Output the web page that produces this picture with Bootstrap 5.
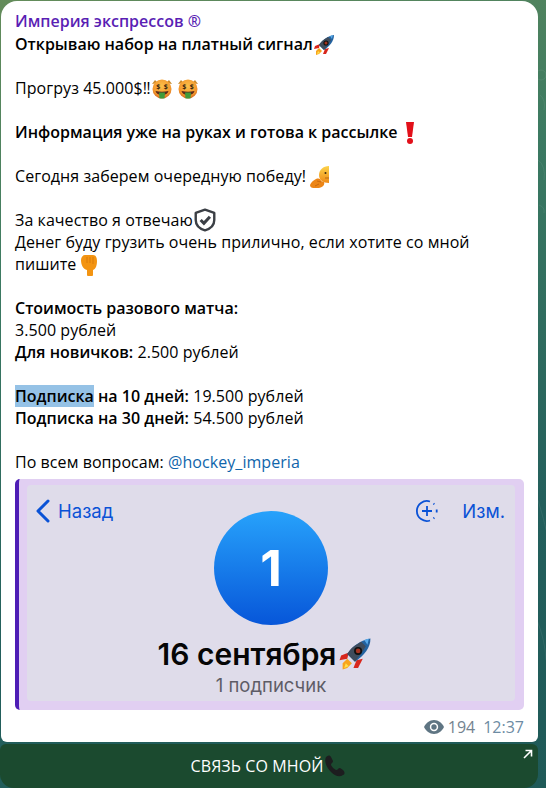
<!DOCTYPE html>
<html lang="ru">
<head>
    <meta charset="UTF-8">
    <meta name="viewport" content="width=device-width, initial-scale=1.0">
    <title>Империя экспрессов</title>
    <link rel="stylesheet" href="https://cdn.jsdelivr.net/npm/bootstrap@5.3.0/dist/css/bootstrap.min.css">
    <style>
        html, body { height: 100%; }
        body { background: linear-gradient(165deg, #648c5a 0%, #3c7a62 30%, #235f5c 70%, #1f5a58 100%); font-family: "Open Sans", sans-serif; font-size: 16px; line-height: 22px; color: #000; overflow: hidden; width: 546px; height: 788px; position: relative; }
        .doodles { position: absolute; inset: 0; pointer-events: none; }
        .chat-col { position: relative; width: 538px; padding-top: 1px; }
        .bubble { background: #fff; margin-left: 1px; border-radius: 16px 16px 6px 6px; padding: 9px 14px 0 14px; height: 741px; }
        .sender { color: #5a1fb4; font-weight: 600; }
        .msg { letter-spacing: .06px; margin-top: 1px; }
        .msg p { margin: 0 0 22px 0; }
        .msg p.last-line { margin-bottom: 0; }
        .msg b { font-weight: 600; letter-spacing: 0; }
        .em { display: inline-block; width: 22px; height: 22px; vertical-align: 0; margin-top: -6px; margin-bottom: -6px; }
        .em-wide { width: 24px; height: 24px; }
        .em-bang { width: 14px; margin-left: 1px; }
        .sel { background: #95c2e6; }
        .tg-link { color: #0f65ab; text-decoration: none; }
        .frame { width: 509px; height: 231px; margin-top: 6px; background: #e1cff2; border-left: 4px solid #4e1db5; border-radius: 5px; padding: 6px 9px 9px 8px; }
        .shot { height: 216px; background: #dfdcea; border-radius: 4px; font-family: Inter, sans-serif; color: #0a52d6; }
        .shot-bar { padding: 14px 10px 0 8px; font-size: 18.500px; line-height: 22px; }
        .shot-edit { margin-left: 23px; }
        .shot-circle { width: 114px; height: 114px; border-radius: 50%; background: linear-gradient(180deg, #27a2fb, #0756d9); color: #fff; font-size: 50px; font-weight: 700; line-height: 114px; text-align: center; margin-top: -12px; }
        .shot-title { color: #060606; font-size: 30px; font-weight: 600; line-height: 38px; margin-top: 10px; margin-right: 12px; white-space: nowrap; }
        .shot-title svg { width: 34px; height: 34px; vertical-align: -6px; margin-left: 2px; }
        .shot-sub { color: #5e5c66; font-size: 18.500px; line-height: 22px; margin-top: 1px; }
        .meta { color: #6d8ba3; line-height: 20px; margin-top: 7px; }
        .meta .views { color: #74838f; }
        .action { position: relative; height: 44px; margin-top: 2px; background: #1b4a2f; border-radius: 6px 6px 14px 14px; color: #fff; letter-spacing: .1px; }
        .action svg.ph { width: 24px; height: 24px; vertical-align: -2px; margin-top: -4px; margin-bottom: -4px; }
        .action svg.arr { position: absolute; top: 5px; right: 5px; width: 11px; height: 11px; }
    </style>
</head>
<body>
<svg width="0" height="0" class="position-absolute">
    <defs>
        <linearGradient id="shg" x1="0" y1="0" x2="0" y2="1"><stop offset="0" stop-color="#fcd34a"/><stop offset="1" stop-color="#ee8a16"/></linearGradient>
        <radialGradient id="mng" cx=".5" cy=".35" r=".7"><stop offset="0" stop-color="#fbc04a"/><stop offset=".7" stop-color="#f3962c"/><stop offset="1" stop-color="#c85a1a"/></radialGradient>
        <symbol id="rocket" viewBox="0 0 22 22">
            <path d="M7 10 2 12 1 15l5-1z" fill="#d8261c"/>
            <path d="M12 15l-2 5 3 0 3-6z" fill="#d8261c"/>
            <path d="M6 14l-3 3 0 4 3-1 3-3z" fill="#f8a41c"/>
            <path d="M5 17l-1 3 3-1z" fill="#ffe14a"/>
            <path d="M6 11C9 6 15 2 21 1c0 6-4 11-10 15z" fill="#23629f"/>
            <path d="M6 11C9 6 12 5 15 3l3 3c-2 4-5 7-7 10z" fill="#3f4c5c"/>
            <path d="M17 2l3-1-1 4z" fill="#57a9ea"/>
            <circle cx="13" cy="9" r="2.600" fill="#111"/>
            <circle cx="13" cy="9" r="1.500" fill="#a33320"/>
        </symbol>
        <symbol id="money" viewBox="0 0 22 22">
            <path d="M1 6 4 2 7 5zM21 6l-3-4-3 3z" fill="#c98a2a"/>
            <circle cx="11" cy="11" r="9.500" fill="url(#mng)"/>
            <text x="7.300" y="11" font-size="7" font-weight="700" text-anchor="middle" fill="#3f2a10" font-family="Open Sans, sans-serif">$</text>
            <text x="14.700" y="11" font-size="7" font-weight="700" text-anchor="middle" fill="#3f2a10" font-family="Open Sans, sans-serif">$</text>
            <path d="M4.500 13q6.500 1.500 13 0q-1 4-6.500 4t-6.500-4z" fill="#5b2a1a"/>
            <path d="M8 14.500h6l-.5 6h-5z" fill="#3f9a3a"/>
        </symbol>
        <symbol id="shush" viewBox="0 0 22 22">
            <path d="M19 0c-6 0-10 4-10 9 0 5 4 8 10 8z" fill="url(#shg)"/>
            <circle cx="15.500" cy="7" r="1" fill="#3a2a10"/>
            <path d="M15 12h4" stroke="#b86a10" fill="none"/>
            <path d="M0 19c1-3 4-5 6-6 3-1 5 0 5 2l3 1c1 3-1 5-5 6-3 0-9 1-9-3z" fill="#ec8516"/>
            <path d="M5 20l4-2M7 15l4 1" stroke="#c96a0c" fill="none"/>
        </symbol>
        <symbol id="point" viewBox="0 0 22 22">
            <path d="M5 6c0-3 2-5 4-5h8c3 0 4 3 4 6 0 4-1 8-4 9v5c0 1-1 1-2 1h-2c-1 0-2 0-2-1v-5c-4-1-6-5-6-10z" fill="#f39412"/>
            <path d="M11 3v6M14 3v6M17 3v7" stroke="#d97a08" fill="none"/>
        </symbol>
    </defs>
</svg>

<svg class="doodles" viewBox="0 0 546 788" fill="none" stroke="#fff" stroke-opacity=".07">
    <circle cx="541" cy="75" r="5"/><path d="M540 95q6 5 4 15M538 160q8 6 6 20M539 205q6 2 5 8M538 500q6 20 8 30M537 620q8 20 9 40"/>
</svg>

<div class="chat-col">
    <div class="bubble">
        <div class="sender">Империя экспрессов ®</div>
        <div class="msg">
            <p><b>Открываю набор на платный сигнал<svg class="em"><use href="#rocket"/></svg></b></p>
            <p>Прогруз 45.000$‼<svg class="em"><use href="#money"/></svg><svg class="em ms-1"><use href="#money"/></svg></p>
            <p><b>Информация уже на руках и готова к рассылке <svg class="em em-bang" viewBox="0 0 14 22"><path d="M3 0h8l-2 15H5z" fill="#e2101a"/><circle cx="7" cy="19" r="3" fill="#e2101a"/></svg></b></p>
            <p>Сегодня заберем очередную победу! <svg class="em"><use href="#shush"/></svg></p>
            <p>За качество я отвечаю<svg class="em em-wide" viewBox="0 0 22 22"><path d="M11 1.500 19.500 4.500V11c0 5-3.500 8-8.500 9.500C6 19 2.500 16 2.500 11V4.500z" fill="none" stroke="#3b3f45" stroke-width="2.200" stroke-linejoin="round"/><path d="M7 11l3 3 5.500-6" fill="none" stroke="#3b3f45" stroke-width="2.800"/></svg><br>
            Денег буду грузить очень прилично, если хотите со мной пишите<svg class="em"><use href="#point"/></svg></p>
            <p><b>Стоимость разового матча:</b><br>3.500 рублей<br><b>Для новичков:</b> 2.500 рублей</p>
            <p><b><span class="sel">Подписка</span> на 10 дней:</b> 19.500 рублей<br><b>Подписка на 30 дней:</b> 54.500 рублей</p>
            <p class="last-line">По всем вопросам: <a class="tg-link" href="#">@hockey_imperia</a></p>
        </div>
        <div class="frame">
            <div class="shot">
                <div class="shot-bar d-flex align-items-center justify-content-between">
                    <div class="d-flex align-items-center gap-2">
                        <svg width="15" height="24" viewBox="0 0 15 24"><path d="M13 2 3 12l10 10" fill="none" stroke="#0a52d6" stroke-width="3" stroke-linecap="round" stroke-linejoin="round"/></svg>
                        <span>Назад</span>
                    </div>
                    <div class="d-flex align-items-center">
                        <svg width="24" height="24" viewBox="0 0 24 24" fill="none" stroke="#0a52d6" stroke-width="1.800"><path d="M15 2.500A10 10 0 1 0 15 21.500M18.500 4.500l.8.8M21.700 10.500v3M18.500 19.500l.8-.8M12 7v10M7 12h10"/></svg>
                        <span class="shot-edit">Изм.</span>
                    </div>
                </div>
                <div class="d-flex flex-column align-items-center">
                    <div class="shot-circle">1</div>
                    <div class="shot-title">16 сентября<svg viewBox="0 0 22 22"><use href="#rocket"/></svg></div>
                    <div class="shot-sub">1 подписчик</div>
                </div>
            </div>
        </div>
        <div class="meta d-flex justify-content-end align-items-center">
            <svg width="20" height="14" viewBox="0 0 20 14" class="me-1"><path d="M10 0C5.500 0 2 3 0 7c2 4 5.500 7 10 7s8-3 10-7c-2-4-5.500-7-10-7z" fill="#5f7583"/><circle cx="10" cy="7" r="4.200" fill="#fff"/><circle cx="10" cy="7" r="2.700" fill="#5f7583"/></svg>
            <span class="views">194</span>
            <span class="ms-2">12:37</span>
        </div>
    </div>
    <div class="action d-flex align-items-center justify-content-center">
        <span>СВЯЗЬ СО МНОЙ<svg class="ph" viewBox="0 0 24 24"><path d="M3 3c2-2 4-2 5 0l2 4c0 2-2 2-2 4 1 2 3 4 5 5 2 0 2-2 4-2l3 2c2 2 2 4 0 5-3 2-7 2-12-3S1 7 3 3z" fill="#1d1d1f"/></svg></span>
        <svg class="arr" viewBox="0 0 11 11"><path d="M2 9 9.500 1.500M3.500 1.500h6v6" fill="none" stroke="#fff" stroke-width="1.600"/></svg>
    </div>
</div>
<script src="https://cdn.jsdelivr.net/npm/bootstrap@5.3.0/dist/js/bootstrap.bundle.min.js"></script>
</body>
</html>
